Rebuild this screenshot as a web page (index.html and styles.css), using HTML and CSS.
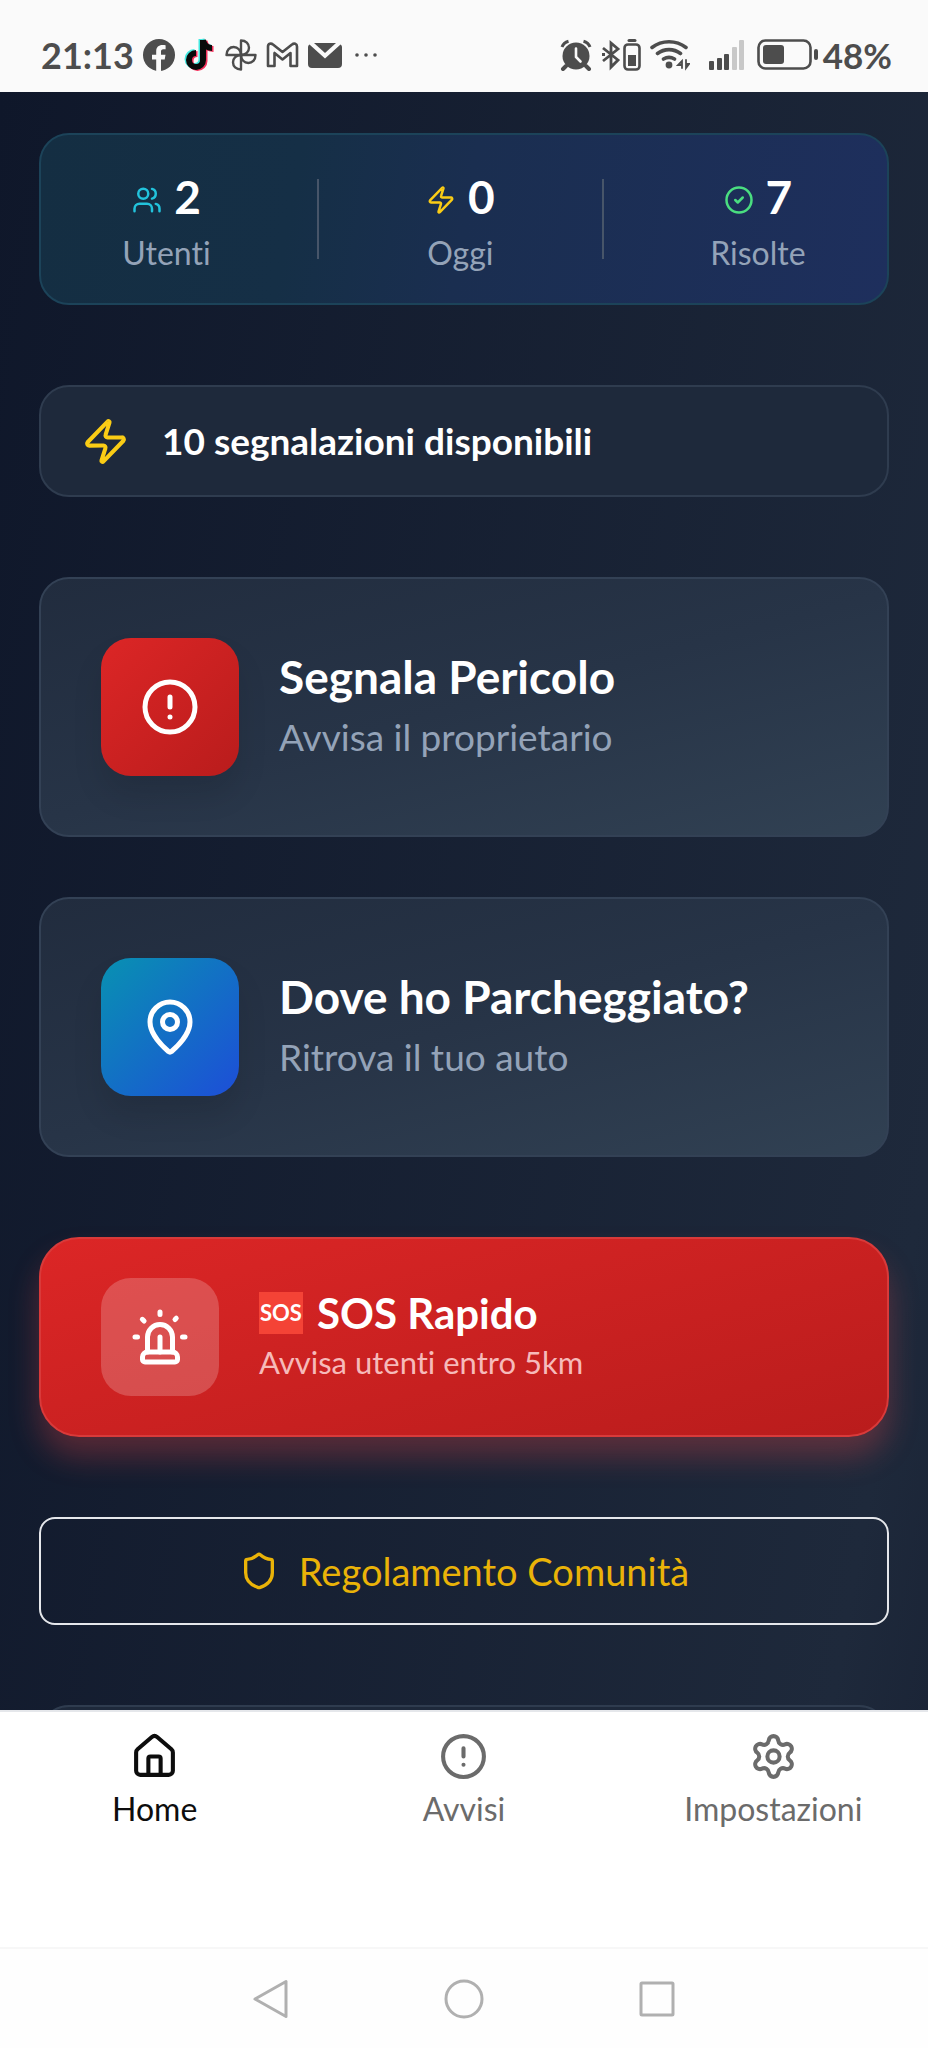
FILE: index.html
```html
<!DOCTYPE html>
<html lang="it">
<head>
    <meta charset="utf-8">
    <meta name="viewport" content="width=device-width, initial-scale=1">
    <title>Home</title>
    <link rel="stylesheet" href="styles.css">
</head>
<body>

    <!-- status bar -->
    <header class="status-bar">
        <div class="status-left">
            <span class="clock">21:13</span>
            <svg width="32" height="32" viewBox="0 0 32 32">
                <circle cx="16" cy="16" r="16" fill="#4d4d4d"/>
                <path d="M13.2 32V20.5H9v-4.8h4.2v-3.4c0-4.2 2.6-6.3 6.2-6.3 1.5 0 2.8.2 3.2.3v4h-2.2c-1.9 0-2.4 1-2.4 2.3v3.1h4.5l-.8 4.8H18V32z" fill="#fafafa"/>
            </svg>
            <svg class="tiktok" width="32" height="34" viewBox="0 0 32 34">
                <g fill="none" stroke-width="6">
                    <g stroke="#43e8e0" transform="translate(-1.5 -1)"><path d="M19 2v20a7 7 0 1 1-7-7M19 2c1 5 4 8 9 8"/></g>
                    <g stroke="#f5315c" transform="translate(1.5 1)"><path d="M19 2v20a7 7 0 1 1-7-7M19 2c1 5 4 8 9 8"/></g>
                    <g stroke="#0a0a0a"><path d="M19 2v20a7 7 0 1 1-7-7M19 2c1 5 4 8 9 8"/></g>
                </g>
            </svg>
            <svg width="32" height="32" viewBox="0 0 32 32" fill="none" stroke="#4d4d4d" stroke-width="2.4" stroke-linejoin="round">
                <path d="M16 16V1.500c5 0 8 3.300 8 7.200 0 4-3.200 7.300-8 7.300z"/>
                <path d="M16 16h14.500c0 5-3.300 8-7.200 8-4 0-7.300-3.200-7.300-8z"/>
                <path d="M16 16v14.500c-5 0-8-3.300-8-7.200 0-4 3.200-7.300 8-7.300z"/>
                <path d="M16 16H1.500c0-5 3.300-8 7.200-8 4 0 7.300 3.200 7.300 8z"/>
            </svg>
            <svg width="33" height="26" viewBox="0 0 33 26" fill="none" stroke="#4d4d4d" stroke-width="2.600" stroke-linejoin="round">
                <path d="M2 24V4.500C2 1.500 5 .8 7 2.500l9.500 7.500L26 2.500c2-1.700 5-1 5 2V24h-6.500V11l-8 6.500-8-6.500v13z"/>
            </svg>
            <svg width="34" height="26" viewBox="0 0 34 26">
                <path d="M6 1h22L17 11z" fill="#4d4d4d"/>
                <path d="M1.500 2.500 17 16.500l15.500-14c1 .7 1.500 1.700 1.500 3V22a4 4 0 0 1-4 4H4a4 4 0 0 1-4-4V5.500c0-1.300.5-2.300 1.500-3z" fill="#4d4d4d"/>
            </svg>
            <svg class="dots" width="22" height="6" viewBox="0 0 22 6" fill="#4d4d4d">
                <circle cx="2" cy="3" r="1.800"/><circle cx="11" cy="3" r="1.800"/><circle cx="20" cy="3" r="1.800"/>
            </svg>
        </div>
        <div class="status-right">
            <svg width="32" height="32" viewBox="0 0 32 32" fill="none" stroke="#4d4d4d">
                <circle cx="16" cy="17" r="13.500" fill="#4d4d4d" stroke="none"/>
                <path d="M2 8c1-3 3.500-5 6.500-5.800M30 8c-1-3-3.500-5-6.500-5.800" stroke-width="3"/>
                <path d="M6 27l-3 3M26 27l3 3" stroke-width="4" stroke-linecap="round"/>
                <path d="M16 9.500V18l4.500 4.500" stroke="#fafafa" stroke-width="2.600" stroke-linecap="round"/>
            </svg>
            <svg width="40" height="34" viewBox="0 0 40 34" fill="none" stroke="#4d4d4d">
                <path d="M2 10l15 12-7 7V5l7 6L2 23M1 16.500h3" stroke-width="2.800"/>
                <rect x="23.500" y="6.500" width="15" height="25" rx="3.500" stroke-width="2.600"/>
                <path d="M28 2.500h6" stroke-width="3" stroke-linecap="round"/>
                <rect x="27" y="17" width="8" height="11" fill="#4d4d4d" stroke="none"/>
            </svg>
            <svg width="40" height="34" viewBox="0 0 40 34" fill="none" stroke="#4d4d4d" stroke-width="3.600" stroke-linecap="round">
                <path d="M2 9.500a28 28 0 0 1 34 0M7.500 15.500a19 19 0 0 1 23 0M13.500 21a10.500 10.500 0 0 1 11 0"/>
                <circle cx="19" cy="27" r="3.400" fill="#4d4d4d" stroke="none"/>
                <path d="M32 30v-7l-4 4h4M36 22v8l3-4h-3" stroke-width="1.800"/>
            </svg>
            <svg class="signal" width="36" height="32" viewBox="0 0 36 32" fill="#4d4d4d">
                <rect x="0" y="22" width="5" height="9" rx="1"/>
                <rect x="8" y="19" width="5" height="12" rx="1"/>
                <rect x="15" y="15" width="5" height="16" rx="1"/>
                <rect x="23" y="8" width="5" height="23" rx="1" fill="#c8c8c8"/>
                <rect x="30" y="1" width="5" height="30" rx="1" fill="#c8c8c8"/>
            </svg>
            <div class="battery">
                <svg width="62" height="32" viewBox="0 0 62 32">
                    <rect x="1.500" y="1.500" width="52" height="28" rx="7" fill="none" stroke="#4d4d4d" stroke-width="2.600"/>
                    <rect x="6" y="6" width="21" height="19" rx="3" fill="#4d4d4d"/>
                    <rect x="57" y="10" width="4" height="11" rx="2" fill="#4d4d4d"/>
                </svg>
                <span>48%</span>
            </div>
        </div>
    </header>

    <main class="content">

        <section class="stats">
            <div class="stat">
                <div class="stat-value">
                    <svg class="icon icon-sm cyan" viewBox="0 0 24 24"><path d="M16 21v-2a4 4 0 0 0-4-4H6a4 4 0 0 0-4 4v2"/><circle cx="9" cy="7" r="4"/><path d="M22 21v-2a4 4 0 0 0-3-3.870M16 3.130a4 4 0 0 1 0 7.750"/></svg>
                    <strong>2</strong>
                </div>
                <span class="stat-label">Utenti</span>
            </div>
            <div class="divider"></div>
            <div class="stat">
                <div class="stat-value">
                    <svg class="icon icon-sm yellow" viewBox="0 0 24 24"><path d="M4 14a1 1 0 0 1-.78-1.630l9.900-10.200a.5.5 0 0 1 .86.460l-1.920 6.020A1 1 0 0 0 13 10h7a1 1 0 0 1 .78 1.630l-9.900 10.200a.5.5 0 0 1-.86-.460l1.920-6.020A1 1 0 0 0 11 14z"/></svg>
                    <strong>0</strong>
                </div>
                <span class="stat-label">Oggi</span>
            </div>
            <div class="divider"></div>
            <div class="stat">
                <div class="stat-value">
                    <svg class="icon icon-sm green" viewBox="0 0 24 24"><circle cx="12" cy="12" r="10"/><path d="m9 12 2 2 4-4"/></svg>
                    <strong>7</strong>
                </div>
                <span class="stat-label">Risolte</span>
            </div>
        </section>

        <section class="available">
            <svg class="icon icon-md yellow" viewBox="0 0 24 24"><path d="M4 14a1 1 0 0 1-.78-1.630l9.900-10.200a.5.5 0 0 1 .86.460l-1.920 6.020A1 1 0 0 0 13 10h7a1 1 0 0 1 .78 1.630l-9.900 10.200a.5.5 0 0 1-.86-.460l1.920-6.020A1 1 0 0 0 11 14z"/></svg>
            <span>10 segnalazioni disponibili</span>
        </section>

        <div class="actions">
            <button type="button" class="action">
                <span class="tile tile-red">
                    <svg class="icon icon-lg" viewBox="0 0 24 24"><circle cx="12" cy="12" r="10"/><path d="M12 8v4M12 16h.01"/></svg>
                </span>
                <span class="action-text">
                    <span class="action-title">Segnala Pericolo</span>
                    <span class="action-sub">Avvisa il proprietario</span>
                </span>
            </button>
            <button type="button" class="action">
                <span class="tile tile-blue">
                    <svg class="icon icon-lg" viewBox="0 0 24 24"><path d="M20 10c0 4.993-5.539 10.193-7.399 11.799a1 1 0 0 1-1.202 0C9.539 20.193 4 14.993 4 10a8 8 0 0 1 16 0"/><circle cx="12" cy="10" r="3"/></svg>
                </span>
                <span class="action-text">
                    <span class="action-title">Dove ho Parcheggiato?</span>
                    <span class="action-sub">Ritrova il tuo auto</span>
                </span>
            </button>
        </div>

        <button type="button" class="sos">
            <span class="tile tile-glass">
                <svg class="icon icon-lg" viewBox="0 0 24 24"><path d="M7 18v-6a5 5 0 1 1 10 0v6"/><path d="M5 21a1 1 0 0 0 1 1h12a1 1 0 0 0 1-1v-1a2 2 0 0 0-2-2H7a2 2 0 0 0-2 2z"/><path d="M21 12h1M18.500 4.500 18 5M2 12h1M12 2v1M4.929 4.929l.707.707M12 12v6"/></svg>
            </span>
            <span class="sos-text">
                <span class="sos-title"><span class="sos-emoji">SOS</span>SOS Rapido</span>
                <span class="sos-sub">Avvisa utenti entro 5km</span>
            </span>
        </button>

        <button type="button" class="rules">
            <svg class="icon icon-rules" viewBox="0 0 24 24"><path d="M20 13c0 5-3.500 7.500-7.660 8.950a1 1 0 0 1-.67-.010C7.500 20.500 4 18 4 13V6a1 1 0 0 1 1-1c2 0 4.500-1.200 6.240-2.720a1.170 1.170 0 0 1 1.520 0C14.510 3.810 17 5 19 5a1 1 0 0 1 1 1z"/></svg>
            <span>Regolamento Comunità</span>
        </button>

        <section class="next-card"></section>
    </main>

    <nav class="tabs">
        <a href="#" class="tab active">
            <svg class="icon icon-md" viewBox="0 0 24 24"><path d="M15 21v-8a1 1 0 0 0-1-1h-4a1 1 0 0 0-1 1v8"/><path d="M3 10a2 2 0 0 1 .709-1.528l7-5.999a2 2 0 0 1 2.582 0l7 5.999A2 2 0 0 1 21 10v9a2 2 0 0 1-2 2H5a2 2 0 0 1-2-2z"/></svg>
            <span>Home</span>
        </a>
        <a href="#" class="tab">
            <svg class="icon icon-md" viewBox="0 0 24 24"><circle cx="12" cy="12" r="10"/><path d="M12 8v4M12 16h.01"/></svg>
            <span>Avvisi</span>
        </a>
        <a href="#" class="tab">
            <svg class="icon icon-md" viewBox="0 0 24 24"><path d="M9.671 4.136a2.340 2.340 0 0 1 4.659 0 2.340 2.340 0 0 0 3.319 1.915 2.340 2.340 0 0 1 2.330 4.033 2.340 2.340 0 0 0 0 3.831 2.340 2.340 0 0 1-2.330 4.033 2.340 2.340 0 0 0-3.319 1.915 2.340 2.340 0 0 1-4.659 0 2.340 2.340 0 0 0-3.320-1.915 2.340 2.340 0 0 1-2.330-4.033 2.340 2.340 0 0 0 0-3.831A2.340 2.340 0 0 1 6.350 6.051a2.340 2.340 0 0 0 3.319-1.915"/><circle cx="12" cy="12" r="3"/></svg>
            <span>Impostazioni</span>
        </a>
    </nav>

    <!-- android navigation -->
    <footer class="system-nav">
        <button type="button" aria-label="Indietro">
            <svg width="40" height="40" viewBox="0 0 40 40"><path d="M4 20 35 2.500v35z"/></svg>
        </button>
        <button type="button" aria-label="Home">
            <svg width="40" height="40" viewBox="0 0 40 40"><circle cx="20" cy="20" r="18"/></svg>
        </button>
        <button type="button" aria-label="Recenti">
            <svg width="40" height="40" viewBox="0 0 40 40"><rect x="4" y="4" width="32" height="32" rx="1"/></svg>
        </button>
    </footer>

</body>
</html>
```
FILE: styles.css
```css
* {
    box-sizing: border-box;
}

body {
    margin: 0;
    height: 100vh;
    display: flex;
    flex-direction: column;
    font-family: Lato, "Liberation Sans", sans-serif;
    font-variant-ligatures: none;
    background-color: #fefefe;
}

button {
    font-family: inherit;
    font-variant-ligatures: none;
    cursor: pointer;
}

/* status bar */
.status-bar {
    height: 92px;
    flex-shrink: 0;
    display: flex;
    justify-content: space-between;
    align-items: center;
    padding: 18px 36px 0 41px;
    background-color: #fafafa;
    color: #4d4d4d;
    font-size: 36px;
    font-weight: 700;
}

.status-left,
.status-right {
    display: flex;
    align-items: center;
    gap: 9px;
}

.dots {
    margin-left: 4px;
}

.signal {
    margin-left: 10px;
}

.battery {
    display: flex;
    align-items: center;
    gap: 4px;
    margin-left: 3px;
    font-size: 35px;
}

/* icons */
.icon {
    flex-shrink: 0;
    fill: none;
    stroke: currentColor;
    stroke-width: 2;
    stroke-linecap: round;
    stroke-linejoin: round;
}

.icon-sm {
    width: 30px;
    height: 30px;
}

.icon-rules {
    width: 40px;
    height: 40px;
}

.icon-md {
    width: 49px;
    height: 49px;
}

.icon-lg {
    width: 60px;
    height: 60px;
}

.cyan {
    color: #22c3dc;
}

.yellow {
    color: #facc15;
}

.green {
    color: #4ade80;
}

/* content */
.content {
    flex: 1;
    min-height: 0;
    overflow: hidden;
    display: flex;
    flex-direction: column;
    gap: 80px;
    padding: 41px 39px 0;
    background: linear-gradient(100deg, #0f172a, #1e293b 92%, #1b2537);
}

.content > * {
    flex-shrink: 0;
}

.stats {
    display: flex;
    justify-content: space-around;
    align-items: center;
    padding: 28px;
    border: 2px solid #1c4359;
    border-radius: 30px;
    background: linear-gradient(100deg, #142e42, #152f46 30%, #1a2e50 50%, #1e2f5d);
}

.stat {
    display: flex;
    flex-direction: column;
    align-items: center;
}

.stat-value {
    display: flex;
    align-items: center;
    gap: 12px;
    color: #fff;
    font-size: 46px;
    line-height: 68px;
}

.stat-value .icon {
    margin-top: 6px;
}

.stat-label {
    color: #94a3b8;
    font-size: 32px;
    line-height: 44px;
}

.divider {
    width: 2px;
    height: 80px;
    background-color: #475569;
}

.available {
    display: flex;
    align-items: center;
    gap: 32px;
    padding: 28px 40px;
    border: 2px solid #2f3c4f;
    border-radius: 30px;
    background-color: #1e293b;
    color: #fff;
    font-size: 37px;
    font-weight: 700;
    line-height: 52px;
}

.actions {
    display: flex;
    flex-direction: column;
    gap: 60px;
}

.action {
    display: flex;
    align-items: center;
    gap: 40px;
    padding: 59px 60px;
    border: 2px solid #334155;
    border-radius: 30px;
    background: linear-gradient(165deg, #212c3e, #273447 50%, #314153);
    text-align: left;
}

.tile {
    display: flex;
    align-items: center;
    justify-content: center;
    width: 138px;
    height: 138px;
    border-radius: 30px;
    color: #fff;
}

.tile-red {
    background: linear-gradient(135deg, #dc2626, #b91c1c);
    box-shadow: 0 20px 30px rgba(0, 0, 0, 0.1);
}

.tile-blue {
    background: linear-gradient(135deg, #0891b2, #1d4ed8);
    box-shadow: 0 20px 30px rgba(0, 0, 0, 0.1);
}

.tile-glass {
    width: 118px;
    height: 118px;
    background-color: rgba(255, 255, 255, 0.2);
}

.action-text,
.sos-text {
    display: flex;
    flex-direction: column;
}

.action-title {
    color: #fff;
    font-size: 46px;
    font-weight: 700;
    line-height: 60px;
}

.action-sub {
    color: #94a3b8;
    font-size: 37px;
    line-height: 60px;
}

.sos {
    display: flex;
    align-items: center;
    gap: 40px;
    padding: 39px 60px;
    border: 2px solid #d93a3a;
    border-radius: 40px;
    background: linear-gradient(165deg, #dc2626, #b91c1c);
    box-shadow: 0 20px 30px rgba(239, 68, 68, 0.3);
    text-align: left;
}

.sos-title {
    display: flex;
    align-items: center;
    gap: 14px;
    color: #fff;
    font-size: 42px;
    font-weight: 700;
    line-height: 50px;
}

.sos-emoji {
    width: 44px;
    height: 42px;
    background-color: #f44336;
    color: #fff;
    font-size: 22px;
    line-height: 42px;
    text-align: center;
}

.sos-sub {
    color: #f6baba;
    font-size: 31px;
    line-height: 48px;
}

.rules {
    display: flex;
    align-items: center;
    justify-content: center;
    gap: 20px;
    padding: 27px;
    border: 2px solid #e5e7eb;
    border-radius: 16px;
    background: none;
    color: #eab308;
    font-size: 38px;
    line-height: 50px;
}

.next-card {
    height: 200px;
    border: 2px solid #2f3c4f;
    border-radius: 30px;
    background-color: #1e293b;
}

/* bottom tabs */
.tabs {
    flex-shrink: 0;
    display: grid;
    grid-template-columns: repeat(3, 1fr);
    padding: 20px 0 116px;
    border-top: 2px solid #e5e7eb;
    background-color: #fff;
}

.tab {
    display: flex;
    flex-direction: column;
    align-items: center;
    gap: 6px;
    color: #6b6b6b;
    font-size: 32px;
    line-height: 44px;
    text-decoration: none;
}

.tab.active {
    color: #0d0d0d;
}

.system-nav {
    height: 101px;
    flex-shrink: 0;
    display: flex;
    justify-content: center;
    align-items: center;
    gap: 153px;
    border-top: 2px solid #f7f7f7;
}

.system-nav button {
    display: flex;
    padding: 0;
    border: none;
    background: none;
}

.system-nav svg {
    fill: none;
    stroke: #b0b0b0;
    stroke-width: 3;
    stroke-linejoin: round;
}
```
